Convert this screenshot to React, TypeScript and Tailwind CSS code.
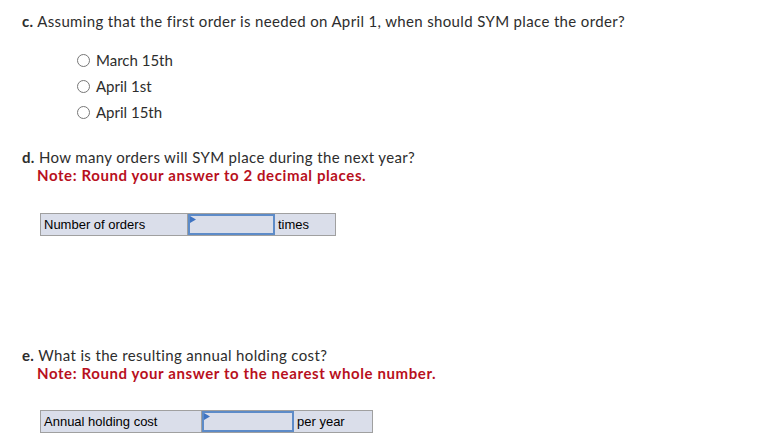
import React from "react";

const options = ["March 15th", "April 1st", "April 15th"];

const AnswerRow = ({
  label,
  unit,
  labelW,
  inputW,
  unitW,
}: {
  label: string;
  unit: string;
  labelW: string;
  inputW: string;
  unitW: string;
}) => (
  <div className="ml-[18px] flex h-[23px] w-fit border border-[#a0a0a0] bg-[#dadeea] font-['Liberation_Sans',Arial,sans-serif] text-[13px] tracking-normal text-black">
    <div className={`${labelW} flex items-center border-r border-[#a0a0a0] pl-[3px]`}>{label}</div>
    <div className={`${inputW} relative border-2 border-[#5d8bc8] bg-[#dadeea]`}>
      <svg className="absolute left-0 top-0" width="6" height="7" viewBox="0 0 6 7">
        <polygon points="0,0 6,3.5 0,7" fill="#3f74c2" />
      </svg>
    </div>
    <div className={`${unitW} flex items-center pl-[3px]`}>{unit}</div>
  </div>
);

export default function App() {
  return (
    <div className="min-h-screen bg-white pl-[22px] pt-[12px] font-['Lato','Open_Sans',sans-serif] text-[15px] leading-[18px] text-[#2d2d2d] [font-variant-ligatures:none]">
      <p className="tracking-[0.35px]">
        <span className="font-bold">c.</span> Assuming that the first order is needed on April 1, when should SYM place the order?
      </p>
      <div className="mt-[17px] pl-[55px]">
        {options.map((o) => (
          <div key={o} className="flex h-[26px] items-center gap-[6px]">
            <span className="h-[13px] w-[13px] rounded-full border border-[#777] bg-white" />
            <span>{o}</span>
          </div>
        ))}
      </div>

      <div className="mt-[23px]">
        <p className="tracking-[0.35px]">
          <span className="font-bold">d.</span> How many orders will SYM place during the next year?
        </p>
        <p className="pl-[15px] font-bold tracking-[0.6px] text-[#b8101d]">Note: Round your answer to 2 decimal places.</p>
      </div>
      <div className="mt-[29px]">
        <AnswerRow label="Number of orders" unit="times" labelW="w-[147px]" inputW="w-[87px]" unitW="w-[60px]" />
      </div>

      <div className="mt-[110px]">
        <p className="tracking-[0.35px]">
          <span className="font-bold">e.</span> What is the resulting annual holding cost?
        </p>
        <p className="pl-[15px] font-bold tracking-[0.6px] text-[#b8101d]">Note: Round your answer to the nearest whole number.</p>
      </div>
      <div className="mt-[28px]">
        <AnswerRow label="Annual holding cost" unit="per year" labelW="w-[161px]" inputW="w-[92px]" unitW="w-[78px]" />
      </div>
    </div>
  );
}
